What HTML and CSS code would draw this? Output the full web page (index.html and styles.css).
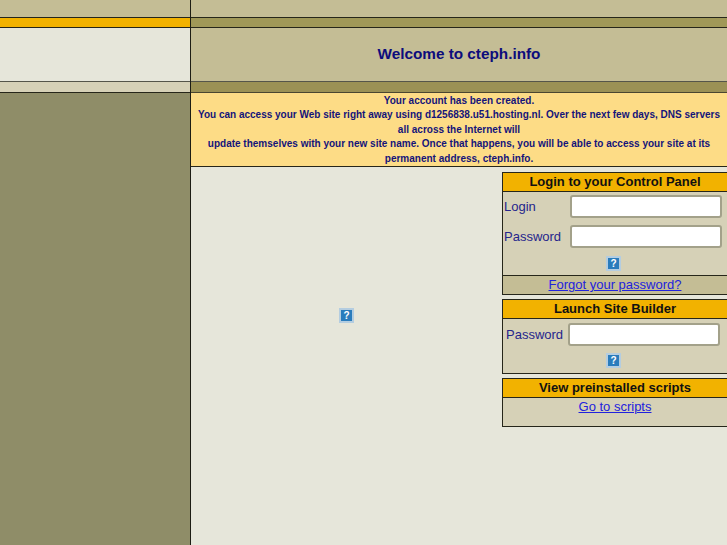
FILE: index.html
```html
<!DOCTYPE html>
<html lang="en">
<head>
<meta charset="utf-8">
<title>Welcome to cteph.info</title>
<link rel="stylesheet" href="styles.css">
</head>
<body>
<div class="page">
  <div class="sidebar">
    <div class="s-top"></div>
    <div class="s-orange"></div>
    <div class="s-light"></div>
    <div class="s-tan"></div>
    <div class="s-olive"></div>
  </div>
  <div class="content">
    <div class="c-top"></div>
    <div class="c-band"></div>
    <div class="c-title"><h1>Welcome to cteph.info</h1></div>
    <div class="c-band2"></div>
    <div class="notice">
      Your account has been created.<br>
      You can access your Web site right away using d1256838.u51.hosting.nl. Over the next few days, DNS servers all across the Internet will<br>
      update themselves with your new site name. Once that happens, you will be able to access your site at its permanent address, cteph.info.
    </div>
    <div class="main">
      <div class="center"><span class="help">?</span></div>
      <div class="panels">
        <section class="panel">
          <h2>Login to your Control Panel</h2>
          <div class="field login-row"><label for="l">Login</label><input id="l" type="text"></div>
          <div class="field pass-row"><label for="p">Password</label><input id="p" type="password"></div>
          <div class="help-row"><span class="help">?</span></div>
          <div class="forgot"><a href="#">Forgot your password?</a></div>
        </section>
        <section class="panel builder">
          <h2>Launch Site Builder</h2>
          <div class="field pass-row"><label for="b">Password</label><input id="b" type="password"></div>
          <div class="help-row"><span class="help">?</span></div>
        </section>
        <section class="panel scripts">
          <h2>View preinstalled scripts</h2>
          <div class="go"><a href="#">Go to scripts</a></div>
        </section>
      </div>
    </div>
  </div>
</div>
</body>
</html>
```
FILE: styles.css
```css
* { box-sizing: border-box; }
html, body { margin: 0; height: 100%; }
body { font-family: "Liberation Sans", Arial, sans-serif; background: #e6e6da; color: #14147a; overflow: hidden; }
.page { display: flex; height: 545px; }
.sidebar { width: 191px; flex: none; display: flex; flex-direction: column; border-right: 1px solid #1d1d14; }
.s-top { height: 18px; background: #c4bd95; border-bottom: 1px solid #26261a; }
.s-orange { height: 10px; background: #f2b200; border-bottom: 1px solid #26261a; }
.s-light { height: 54px; background: #e6e6da; border-bottom: 1px solid #55554a; }
.s-tan { height: 11px; background: #d6d1b7; border-bottom: 1px solid #26261a; }
.s-olive { flex: 1; background: #8f8d68; }
.content { flex: 1; min-width: 0; display: flex; flex-direction: column; }
.c-top { height: 18px; background: #c4bd95; border-bottom: 1px solid #26261a; }
.c-band { height: 10px; background: #a09858; border-bottom: 1px solid #26261a; }
.c-title { height: 54px; padding-bottom: 2px; background: #c4bd95; border-bottom: 1px solid #55554a; display: flex; align-items: center; justify-content: center; }
.c-title h1 { margin: 0; font-size: 15.3px; font-weight: bold; color: #0c0c7c; }
.c-band2 { height: 11px; background: #9b9155; border-bottom: 1px solid #4a4630; }
.notice { height: 74px; padding: 0.5px 5px 0; background: #fddc86; border-bottom: 1px solid #26261a; font-size: 10px; font-weight: bold; line-height: 14.5px; text-align: center; color: #14147a; }
.main { flex: 1; display: flex; align-items: flex-start; }
.center { flex: 1; display: flex; justify-content: center; padding-top: 141px; }
.panels { width: 225px; flex: none; padding-top: 5px; display: flex; flex-direction: column; gap: 4px; }
.panel { background: #d6d1b7; border: 1px solid #26261a; border-right: 0; font-size: 13px; }
.panel h2 { margin: 0; height: 19px; background: #f2b200; border-bottom: 1px solid #26261a; font-size: 13px; line-height: 18px; font-weight: bold; text-align: center; color: #111; }
.field { display: flex; align-items: center; justify-content: space-between; padding: 0 5px 0 1px; }
.login-row { height: 29px; }
.pass-row { height: 31px; }
.field label { color: #25258c; }
.field input { width: 152px; height: 23px; padding: 0 3px; background: #fff; border: 2px solid #a3a18a; border-radius: 3px; margin: 0; }
.help-row { height: 23px; padding-right: 3px; display: flex; justify-content: center; align-items: center; }
.help { display: block; width: 15px; height: 15px; background: #2a7cbc; border: 2px solid #b4cde0; color: #fff; font: bold 10px/11px "Liberation Sans", Arial, sans-serif; text-align: center; }
.forgot { height: 19px; background: #c4bd95; border-top: 1px solid #26261a; text-align: center; line-height: 17px; }
a { color: #2222dd; }
.builder .field { padding: 0 7px 0 3px; }
.builder .help-row { padding-bottom: 2px; }
.scripts .go { height: 28px; text-align: center; line-height: 17px; }
```
